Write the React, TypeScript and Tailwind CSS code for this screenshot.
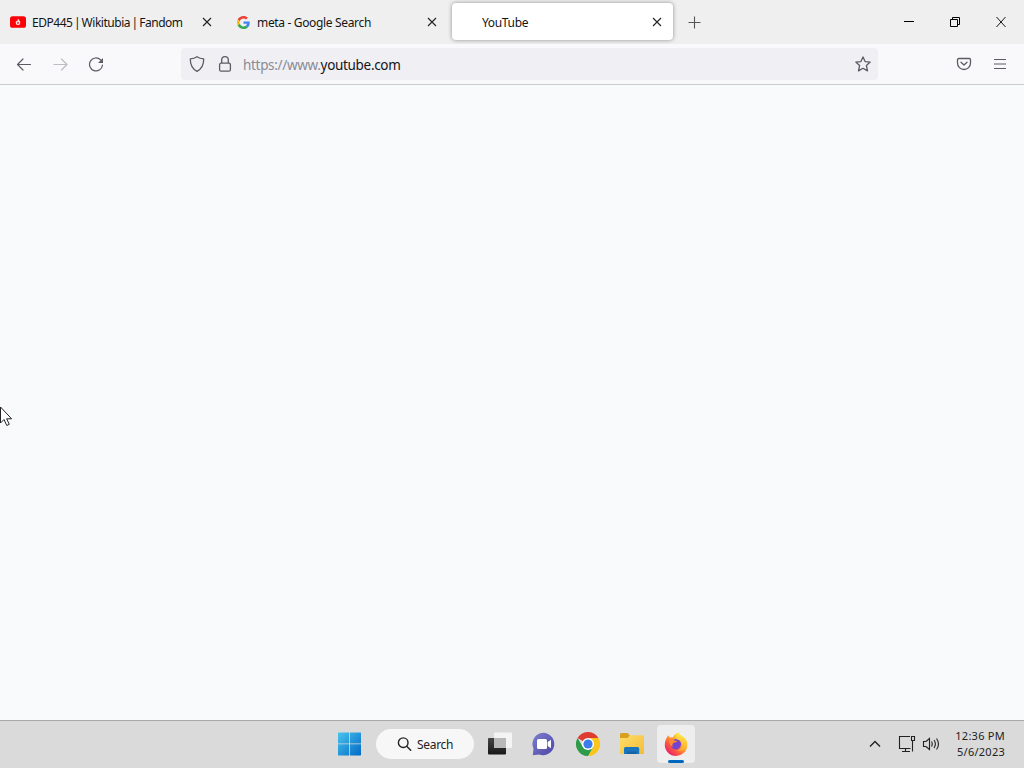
import React from "react";

function CloseIcon() {
  return (
    <svg className="h-[10px] w-[10px] shrink-0" viewBox="0 0 10 10" fill="none" stroke="#222" strokeWidth="1.1">
      <path d="M1 1l8 8M9 1L1 9" />
    </svg>
  );
}

function FandomIcon() {
  return (
    <svg className="h-4 w-4 shrink-0" viewBox="0 0 16 16">
      <rect x="0" y="2.200" width="16" height="11.600" rx="2.600" fill="#fb0007" />
      <path d="M8 4.600c.3 1 2.300 2 2.300 4.100A2.200 2.200 0 0 1 8 11a2.200 2.200 0 0 1-2.300-2.300c0-.9.5-1.300.8-1.900l.6.8C7.900 6.700 7.500 5.700 8 4.600z" fill="#ffe2e2" />
      <circle cx="8" cy="8.900" r=".9" fill="#f50010" />
    </svg>
  );
}

function GoogleIcon() {
  return (
    <svg className="h-[13px] w-[13px] shrink-0" viewBox="0 0 48 48">
      <path fill="#EA4335" d="M24 9.500c3.540 0 6.710 1.220 9.210 3.600l6.850-6.850C35.900 2.380 30.470 0 24 0 14.620 0 6.510 5.380 2.560 13.220l7.980 6.190C12.430 13.720 17.740 9.500 24 9.500z" />
      <path fill="#4285F4" d="M46.980 24.550c0-1.570-.15-3.090-.38-4.550H24v9.020h12.940c-.58 2.960-2.260 5.480-4.780 7.180l7.730 6c4.510-4.180 7.090-10.360 7.090-17.650z" />
      <path fill="#FBBC05" d="M10.530 28.590c-.48-1.450-.76-2.990-.76-4.590s.27-3.140.76-4.590l-7.980-6.190C.92 16.460 0 20.120 0 24c0 3.880.92 7.540 2.560 10.780l7.970-6.190z" />
      <path fill="#34A853" d="M24 48c6.480 0 11.930-2.130 15.890-5.810l-7.730-6c-2.150 1.450-4.920 2.300-8.160 2.300-6.260 0-11.570-4.220-13.470-9.910l-7.980 6.190C6.510 42.620 14.620 48 24 48z" />
    </svg>
  );
}

function TabStrip() {
  return (
    <header className="flex h-11 shrink-0 bg-[#efefef] text-[12px] text-[#151515]">
      <div className="flex w-[226px] items-center pr-[14px] pl-[10px]">
        <FandomIcon />
        <span className="ml-[6px] flex-1 pt-[2px] tracking-[-0.48px] whitespace-nowrap [word-spacing:-1.100px]">EDP445 | Wikitubia | Fandom</span>
        <CloseIcon />
      </div>
      <div className="flex w-[225px] items-center pr-[14px] pl-[11px]">
        <GoogleIcon />
        <span className="ml-[7px] flex-1 pt-[2px] tracking-[-0.34px] whitespace-nowrap">meta - Google Search</span>
        <CloseIcon />
      </div>
      <div className="mt-[3px] ml-[1px] flex h-[37px] w-[221px] items-center rounded-[4px] bg-white pr-[11px] pl-[30px] shadow-[0_0_4px_rgba(0,0,0,0.4)]">
        <span className="flex-1 pt-[2px] tracking-[-0.34px]">YouTube</span>
        <CloseIcon />
      </div>
      <svg className="mt-4 ml-[15px] h-[13px] w-[13px]" viewBox="0 0 13 13" stroke="#555" strokeWidth="1.100">
        <path d="M.5 6.500h12M6.500.5v12" />
      </svg>
      <div className="ml-auto flex items-start pt-4 pr-[18px]">
        <svg className="h-3 w-[102px]" viewBox="0 0 102 12" fill="none" stroke="#000">
          <path d="M0 5.500h10" />
          <path d="M46.500 3.500h7v7h-7zM48.500 3.500v-2h7v7h-2" />
          <path d="M92.500 1l9 10M101.500 1l-9 10" strokeWidth=".9" />
        </svg>
      </div>
    </header>
  );
}

function Toolbar() {
  return (
    <div className="flex h-[41px] shrink-0 items-center border-b border-[#cccccf] bg-[#f9f9fb] pl-4">
      <svg className="h-4 w-[88px]" viewBox="0 0 88 16" fill="none" stroke="#5b5b66" strokeWidth="1.200" strokeLinecap="round" strokeLinejoin="round">
        <path d="M1.500 8.500h13M7 3L1.500 8.500 7 14" />
        <path d="M38 8.500h13M45.500 3L51 8.500 45.500 14" stroke="#bcbcc2" />
        <path d="M86.500 9a6.500 6.500 0 1 1-2-5.300l1.500 1.500" />
        <path d="M87 2v5h-5z" fill="#5b5b66" stroke="none" />
      </svg>
      <div className="ml-[77px] flex h-8 w-[697px] items-center rounded bg-[#f0f0f4] pr-[7px] pl-2">
        <svg className="h-4 w-4" viewBox="0 0 16 16" fill="none" stroke="#5b5b66" strokeWidth="1.300" strokeLinejoin="round">
          <path d="M8 .7c2 1.400 4.200 2 6.700 2.200.1 5.700-1.700 10-6.700 12.400C3 12.900 1.200 8.600 1.300 2.900 3.800 2.700 6 2.100 8 .7z" />
        </svg>
        <svg className="ml-3 h-4 w-4" viewBox="0 0 16 16" fill="none" stroke="#5b5b66" strokeWidth="1.300">
          <rect x="2.600" y="7.200" width="10.800" height="8" rx="1.500" />
          <path d="M4.700 7V4a3.300 3.300 0 0 1 6.600 0v3" />
        </svg>
        <span className="ml-[10px] flex-1 pt-[2px] text-[13.5px] tracking-[-0.32px] text-[#8b8b94]">
          https://www.<span className="text-[#15141a]">youtube.com</span>
        </span>
        <svg className="h-4 w-4" viewBox="0 0 16 16" fill="none" stroke="#5b5b66" strokeWidth="1.300" strokeLinejoin="round">
          <path d="M8 .9l2.100 4.700 5.100.5-3.800 3.400 1.100 5.400L8 12.300l-4.500 2.600 1.100-5.400L.8 6.100l5.100-.5z" />
        </svg>
      </div>
      <svg className="ml-[78px] h-4 w-4" viewBox="0 0 16 16" fill="none" stroke="#5b5b66" strokeWidth="1.300" strokeLinecap="round" strokeLinejoin="round">
        <path d="M2.700 2.500h10.600a1.200 1.200 0 0 1 1.200 1.200V7A6.500 6.500 0 0 1 1.500 7V3.700A1.200 1.200 0 0 1 2.700 2.500z" />
        <path d="M5 6.300L8 9l3-2.700" />
      </svg>
      <svg className="ml-5 h-4 w-4" viewBox="0 0 16 16" stroke="#5b5b66" strokeWidth="1.200">
        <path d="M2 3.500h12M2 8h12M2 12.500h12" />
      </svg>
    </div>
  );
}

function WindowsIcon() {
  return (
    <svg className="h-6 w-6" viewBox="0 0 24 24">
      <defs>
        <linearGradient id="win" x1="0" y1="0" x2="24" y2="24" gradientUnits="userSpaceOnUse">
          <stop stopColor="#4cc8f0" />
          <stop offset="1" stopColor="#0067c5" />
        </linearGradient>
      </defs>
      <path fill="url(#win)" d="M1.500.5h10.600v11H1V1zM12.900.5h10.700l.5.5v10.500H12.900zM1 12.300h11.100v11.200H1.500L1 23zM12.900 12.300H24V23l-.5.5H12.900z" />
    </svg>
  );
}

function TaskViewIcon() {
  return (
    <svg className="h-6 w-6" viewBox="0 0 24 24">
      <defs>
        <linearGradient id="dark" x2="0" y2="1"><stop stopColor="#454545" /><stop offset="1" stopColor="#171717" /></linearGradient>
      </defs>
      <rect y="6" width="18" height="16.500" rx="1" fill="url(#dark)" />
      <rect x="6" y=".5" width="18" height="15.500" rx="1" fill="#f4f4f4" />
      <path d="M6 6h12v10H7l-1-1z" fill="#b8b8b8" />
    </svg>
  );
}

function ChatIcon() {
  return (
    <svg className="h-6 w-6" viewBox="0 0 24 24">
      <defs>
        <linearGradient id="chat" x1="0" y1="0" x2="1" y2="1"><stop stopColor="#7e80cf" /><stop offset="1" stopColor="#4b45a5" /></linearGradient>
      </defs>
      <path d="M12 .8A11.200 11.200 0 1 1 7 22.400L.8 23.200 1.500 16.800A11.200 11.200 0 0 1 12 .8z" fill="url(#chat)" />
      <rect x="5" y="7" width="10" height="10" rx="1.500" fill="#fff" />
      <path d="M15.700 10l3.300-2.300v8.600L15.700 14z" fill="#fff" />
    </svg>
  );
}

function ChromeIcon() {
  return (
    <svg className="h-6 w-6" viewBox="0 0 24 24">
      <path fill="#df3c31" d="M12 12L1.600 6A12 12 0 0 1 22.400 6z" />
      <path fill="#fbc51c" d="M12 6h10.400A12 12 0 0 1 12 24l5.200-9z" />
      <path fill="#2d9b48" d="M1.600 6A12 12 0 0 0 12 24l5.200-9-5.200 3-5.200-3z" />
      <circle cx="12" cy="12" r="6" fill="#fff" />
      <circle cx="12" cy="12" r="4.600" fill="#3b7ded" />
    </svg>
  );
}

function FolderIcon() {
  return (
    <svg className="h-6 w-6" viewBox="0 0 24 24">
      <defs>
        <linearGradient id="folder" x2="1" y2="1"><stop stopColor="#ffdc6a" /><stop offset="1" stopColor="#f2bd37" /></linearGradient>
      </defs>
      <path d="M0 2.500c0-1 .5-1.500 1.500-1.500h6L10 3.500V8H0z" fill="#d8a01e" />
      <path d="M0 6h7.500L10 3.200h12.500q1.500 0 1.500 1.500V22H1.300Q0 22 0 20.700z" fill="url(#folder)" />
      <path d="M4 22v-5.500q0-1.500 1.500-1.500h12.200q1.500 0 1.500 1.500V22z" fill="#1975bd" />
      <path d="M7 22v-2.500h9.500V22z" fill="#1464a5" />
    </svg>
  );
}

function FirefoxIcon() {
  return (
    <svg className="h-6 w-6" viewBox="0 0 24 24">
      <defs>
        <linearGradient id="flame" x1="21" y1="3" x2="3" y2="22" gradientUnits="userSpaceOnUse">
          <stop stopColor="#fff44f" />
          <stop offset=".35" stopColor="#ffb22e" />
          <stop offset=".65" stopColor="#ff603c" />
          <stop offset="1" stopColor="#e51672" />
        </linearGradient>
        <linearGradient id="tail" x1="20" y1="0" x2="16" y2="22" gradientUnits="userSpaceOnUse">
          <stop stopColor="#fff34a" />
          <stop offset="1" stopColor="#ff9828" />
        </linearGradient>
      </defs>
      <path d="M4.200 3.200c.4 1 .9 1.700 1.700 2.300 1-.4 2-.4 3-.2C10 3 12 1.400 14.500.5c.1 2 1.400 3.200 3.200 4.400 2.900 2 5.600 4.200 5.600 8.300A11.200 10.800 0 0 1 .8 13C.7 9.500 2.200 6 4.200 3.200z" fill="url(#flame)" />
      <circle cx="11.800" cy="12.200" r="5.300" fill="#7842d0" />
      <path d="M14.500.5c-3 2.300-3 5.200-.7 7.100 3.200.4 5 2.700 4.600 5.900-.4 3-2.500 4.900-5.400 5.300 5.300 1.200 9.500-2.300 10.300-6.200C23.500 7.500 20 5.400 17.500 3.500 15.900 2.500 14.800 1.500 14.500.5z" fill="url(#tail)" />
      <path d="M5 8.400c2-1.500 4.100-1 5.400.2 1 .2 2 .2 3 .4-.5 1.300-2.200 1.300-3.600 1.800-1.300.9-1.900 2.500-1 4.200C6.300 13.800 5 11.300 5 8.400z" fill="#ff8a2c" />
    </svg>
  );
}

function Taskbar() {
  return (
    <footer className="flex h-12 shrink-0 items-center border-t border-[#a9a9ab] bg-[#dadada] pb-[2px] pl-[337px]">
      <WindowsIcon />
      <div className="ml-[15px] flex h-[30px] w-[98px] items-center rounded-full bg-[#f7f7f7] pl-[21px] text-[12px] text-[#222]">
        <svg className="h-[15px] w-[15px]" viewBox="0 0 15 15" fill="none" stroke="#222" strokeWidth="1.400" strokeLinecap="round">
          <circle cx="6.200" cy="6.700" r="4.800" />
          <path d="M9.700 10.200l4 4" />
        </svg>
        <span className="ml-[5px] pt-[2px] tracking-[-0.3px]">Search</span>
      </div>
      <div className="ml-[14px] flex gap-5">
        <TaskViewIcon />
        <ChatIcon />
        <ChromeIcon />
        <FolderIcon />
      </div>
      <div className="ml-[13px] flex h-[38px] w-[38px] flex-col items-center rounded bg-[#eeeeef] pt-[7px]">
        <FirefoxIcon />
        <div className="mt-1 h-[3px] w-4 shrink-0 rounded-full bg-[#0067c0]" />
      </div>
      <svg className="ml-[174px] h-[18px] w-[72px]" viewBox="0 0 72 18" fill="none" stroke="#222" strokeWidth="1.100">
        <path d="M1 11.500l5-5 5 5" strokeWidth="1.400" />
        <path d="M41 1.500H30.500v12h11M36.500 14v2.500M33 16.500h8M42.500 1.500h3v4h-3zM43.500 5.500v11" />
        <path d="M54.500 6.500h2.500l3.500-3v11l-3.500-3h-2.500zM62.500 6.500q1.500 2.500 0 5M65 5q2.800 4 0 8M67.500 3.500q4 5.500 0 11" />
      </svg>
      <div className="mr-[19px] ml-auto text-right text-[11px] leading-4 tracking-[0.26px] whitespace-nowrap text-[#222]">
        <div>12:36 PM</div>
        <div>5/6/2023</div>
      </div>
    </footer>
  );
}

export default function App() {
  return (
    <div className="relative flex h-[768px] w-[1024px] flex-col overflow-hidden bg-[#f9f9fb] font-['Noto_Sans','Open_Sans',sans-serif]">
      <TabStrip />
      <Toolbar />
      <main className="flex-1 bg-[#f9fafc]" />
      <Taskbar />
      <svg className="absolute top-[406px] left-0 h-[21px] w-[13px]" viewBox="0 0 13 21">
        <path d="M.5 1v16l3.500-3.500 2.800 6 2.500-1.200-2.700-5.500h5z" fill="#fff" stroke="#222" strokeWidth="1" />
      </svg>
    </div>
  );
}
